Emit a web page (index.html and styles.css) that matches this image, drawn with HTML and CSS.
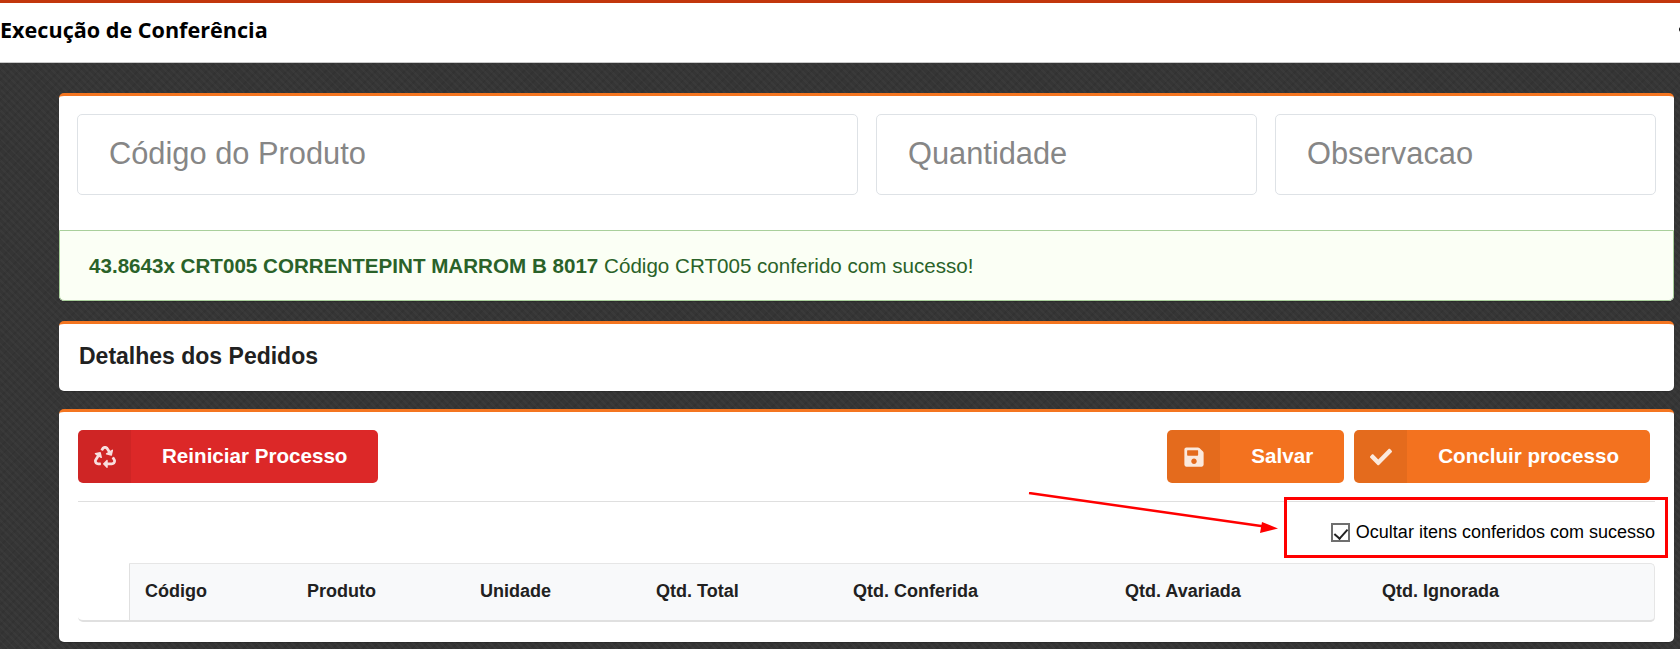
FILE: index.html
```html
<!DOCTYPE html>
<html lang="pt-BR">
<head>
<meta charset="utf-8">
<title>Execução de Conferência</title>
<link rel="stylesheet" href="styles.css">
</head>
<body>
<header class="topbar">
  <h1 class="topbar-title">Execução de Conferência</h1>
  <span class="topbar-dot"></span>
</header>
<main class="content">
  <section class="card">
    <div class="inputs">
      <input class="field" type="text" placeholder="Código do Produto">
      <input class="field" type="text" placeholder="Quantidade">
      <input class="field" type="text" placeholder="Observacao">
    </div>
    <div class="alert"><strong>43.8643x CRT005 CORRENTEPINT MARROM B 8017</strong> Código CRT005 conferido com sucesso!</div>
  </section>
  <section class="card card-title">
    <h2 class="section-title">Detalhes dos Pedidos</h2>
  </section>
  <section class="card card-actions">
    <div class="toolbar">
      <button class="btn btn-red" type="button">
        <span class="btn-icon"><svg class="icon" viewBox="0 0 512 512"><path d="M184.561 261.903c3.232 13.997-12.123 24.635-24.068 17.168l-40.736-25.455-50.867 81.402C55.606 356.273 70.96 384 96.012 384H148c6.627 0 12 5.373 12 12v40c0 6.627-5.373 12-12 12H96.115c-75.334 0-121.302-83.048-81.408-146.88l50.822-81.388-40.725-25.448c-12.081-7.547-8.966-25.961 4.879-29.158l110.237-25.45c8.611-1.988 17.201 3.381 19.189 11.99l25.452 110.237zm98.561-182.915l41.289 66.076-40.74 25.457c-12.051 7.528-9 25.953 4.879 29.158l110.237 25.45c8.672 1.999 17.215-3.438 19.189-11.99l25.45-110.237c3.197-13.845-11.99-24.711-24.068-17.168l-40.687 25.424-41.263-66.082c-37.521-60.033-125.209-60.171-162.816 0l-17.963 28.766c-3.51 5.62-1.8 13.021 3.82 16.533l33.919 21.195c5.62 3.512 13.024 1.803 16.536-3.817l17.961-28.743c12.712-20.341 41.973-19.676 54.257-.022zM497.288 301.12l-27.515-44.065c-3.511-5.623-10.916-7.334-16.538-3.821l-33.861 21.159c-5.62 3.512-7.33 10.915-3.818 16.536l27.564 44.112c13.257 21.211-2.057 48.96-27.136 48.96H320V336.02c0-14.213-17.242-21.383-27.313-11.313l-80 79.981c-6.249 6.248-6.249 16.379 0 22.627l80 79.989C302.689 517.308 320 510.3 320 495.989V448h95.88c75.274 0 121.335-82.997 81.408-146.88z"/></svg></span>
        <span class="btn-text">Reiniciar Processo</span>
      </button>
      <div class="toolbar-right">
        <button class="btn btn-orange" type="button">
          <span class="btn-icon"><svg class="icon" viewBox="0 0 448 512"><path d="M433.941 129.941l-83.882-83.882A48 48 0 0 0 316.118 32H48C21.49 32 0 53.49 0 80v352c0 26.51 21.49 48 48 48h352c26.51 0 48-21.49 48-48V163.882a48 48 0 0 0-14.059-33.941zM224 416c-35.346 0-64-28.654-64-64 0-35.346 28.654-64 64-64s64 28.654 64 64c0 35.346-28.654 64-64 64zm96-304.52V212c0 6.627-5.373 12-12 12H76c-6.627 0-12-5.373-12-12V108c0-6.627 5.373-12 12-12h228.52c3.183 0 6.235 1.264 8.485 3.515l3.48 3.48A11.996 11.996 0 0 1 320 111.48z"/></svg></span>
          <span class="btn-text">Salvar</span>
        </button>
        <button class="btn btn-orange" type="button">
          <span class="btn-icon"><svg class="icon" viewBox="0 0 512 512"><path d="M173.898 439.404l-166.4-166.4c-9.997-9.997-9.997-26.206 0-36.204l36.203-36.204c9.997-9.998 26.207-9.998 36.204 0L192 312.69 432.095 72.596c9.997-9.997 26.207-9.997 36.204 0l36.203 36.204c9.997 9.997 9.997 26.206 0 36.204l-294.4 294.401c-9.998 9.997-26.207 9.997-36.204-.001z"/></svg></span>
          <span class="btn-text">Concluir processo</span>
        </button>
      </div>
    </div>
    <hr class="divider">
    <label class="check-row">
      <input class="check" type="checkbox" checked>
      <span>Ocultar itens conferidos com sucesso</span>
    </label>
    <div class="table-wrap">
      <div class="table-gutter"></div>
      <div class="table-box">
        <table class="table">
          <thead>
            <tr>
              <th class="col-code">Código</th>
              <th class="col-product">Produto</th>
              <th class="col-unit">Unidade</th>
              <th class="col-total">Qtd. Total</th>
              <th class="col-checked">Qtd. Conferida</th>
              <th class="col-damaged">Qtd. Avariada</th>
              <th>Qtd. Ignorada</th>
            </tr>
          </thead>
        </table>
      </div>
    </div>
    <div class="mark-box"></div>
    <svg class="mark-arrow" viewBox="0 0 260 44" width="260" height="44">
      <path class="mark-line" d="M1 1 L240 35"/>
      <path class="mark-head" d="M250 36.5 L234 30 L232 41 Z"/>
    </svg>
  </section>
</main>
</body>
</html>
```
FILE: styles.css
```css
* { box-sizing: border-box; }
html, body { margin: 0; padding: 0; }
body {
  height: 649px;
  overflow: hidden;
  font-family: "Liberation Sans", Arial, sans-serif;
  color: #212529;
  background-color: #353535;
  background-image:
    repeating-linear-gradient(45deg, rgba(255,255,255,.025) 0 2px, transparent 2px 5px),
    repeating-linear-gradient(-45deg, rgba(0,0,0,.06) 0 2px, transparent 2px 7px);
}
.topbar {
  height: 63px;
  padding-bottom: 6px;
  background: #fff;
  border-top: 3px solid #c2360c;
  border-bottom: 1px solid #c9c9c9;
  display: flex;
  align-items: center;
  justify-content: space-between;
  overflow: hidden;
}
.topbar-title {
  margin: 0;
  font-family: "Open Sans", sans-serif;
  font-size: 21.6px;
  font-weight: 700;
  color: #000;
}
.topbar-dot {
  width: 5px;
  height: 5px;
  margin-right: -4px;
  border-radius: 50%;
  background: #111;
}
.content {
  padding: 30px 6px 0 59px;
}
.card {
  background: #fff;
  border-top: 3px solid #f47520;
  border-radius: 5px;
  box-shadow: 0 1px 1px rgba(0,0,0,.2);
}
.inputs {
  display: grid;
  grid-template-columns: 781fr 381fr 381fr;
  gap: 18px;
  padding: 18px 18px 35px;
}
.field {
  height: 81px;
  min-width: 0;
  padding: 0 31px 2px;
  border: 1px solid #dee2e6;
  border-radius: 5px;
  font-family: inherit;
  font-size: 30.8px;
  color: #212529;
  background: #fff;
}
.field::placeholder { color: #868686; opacity: 1; }
.alert {
  height: 71px;
  display: flex;
  align-items: center;
  gap: .28em;
  padding: 0 29px;
  background: #fbfff5;
  border: 1px solid #a9cf9b;
  border-radius: 0 0 5px 5px;
  color: #2a6229;
  font-size: 20.6px;
}
.card-title {
  margin-top: 20px;
  height: 70px;
  display: flex;
  align-items: center;
  padding: 0 20px 2px;
}
.section-title {
  margin: 0;
  font-size: 23px;
  font-weight: 700;
  color: #212121;
}
.card-actions {
  position: relative;
  margin-top: 18px;
  height: 233px;
  padding: 18px 19px 0;
}
.toolbar {
  display: flex;
  justify-content: space-between;
}
.toolbar-right {
  display: flex;
  gap: 10px;
  margin-right: 5px;
}
.btn {
  height: 53px;
  display: flex;
  align-items: stretch;
  padding: 0;
  border: 0;
  border-radius: 5px;
  overflow: hidden;
  color: #fff;
  font-family: inherit;
  font-size: 20.6px;
  font-weight: 700;
}
.btn-red { background: #dc2828; }
.btn-orange { background: #f3721f; }
.btn-icon {
  width: 53px;
  display: flex;
  align-items: center;
  justify-content: center;
  background: rgba(0,0,0,.06);
}
.icon {
  width: 22px;
  height: 22px;
  fill: rgba(255,255,255,.85);
}
.btn-text {
  display: flex;
  align-items: center;
  padding: 0 31px 2px;
}
.divider {
  margin: 18px 0 0;
  border: 0;
  border-top: 1px solid #dfdfdf;
}
.check-row {
  display: flex;
  align-items: center;
  justify-content: flex-end;
  gap: 6px;
  height: 61px;
  font-size: 18px;
  color: #000;
}
.check {
  appearance: none;
  -webkit-appearance: none;
  position: relative;
  width: 19px;
  height: 19px;
  margin: 0;
  border: 2px solid #6f6f6f;
  background: #fff;
}
.check:checked::after {
  content: "";
  position: absolute;
  left: 4.5px;
  top: 0.5px;
  width: 6px;
  height: 11px;
  border: solid #222;
  border-width: 0 2px 2px 0;
  transform: rotate(42deg);
}
.table-wrap {
  display: flex;
  height: 59px;
  border-bottom: 2px solid #e0e0e0;
  border-radius: 5px;
}
.table-gutter {
  width: 51px;
  flex: none;
}
.table-box {
  flex: 1;
  margin-bottom: -2px;
  background: #f8f9fa;
  border: 1px solid #e6e6e6;
  border-left-color: #e0e0e0;
  border-bottom: 2px solid #e0e0e0;
  border-radius: 0 5px 5px 0;
}
.table {
  width: 100%;
  height: 100%;
  border-collapse: collapse;
  table-layout: fixed;
}
.table th {
  text-align: left;
  padding: 0 0 2px 15px;
  font-size: 18px;
  font-weight: 700;
  color: #212121;
}
.col-code { width: 162px; }
.col-product { width: 173px; }
.col-unit { width: 176px; }
.col-total { width: 197px; }
.col-checked { width: 272px; }
.col-damaged { width: 257px; }
.mark-box {
  position: absolute;
  left: 1225px;
  top: 85px;
  width: 384px;
  height: 61px;
  border: 3px solid #f00;
}
.mark-arrow {
  position: absolute;
  left: 969px;
  top: 80px;
}
.mark-line { fill: none; stroke: #f00; stroke-width: 2.5; }
.mark-head { fill: #f00; }
```
